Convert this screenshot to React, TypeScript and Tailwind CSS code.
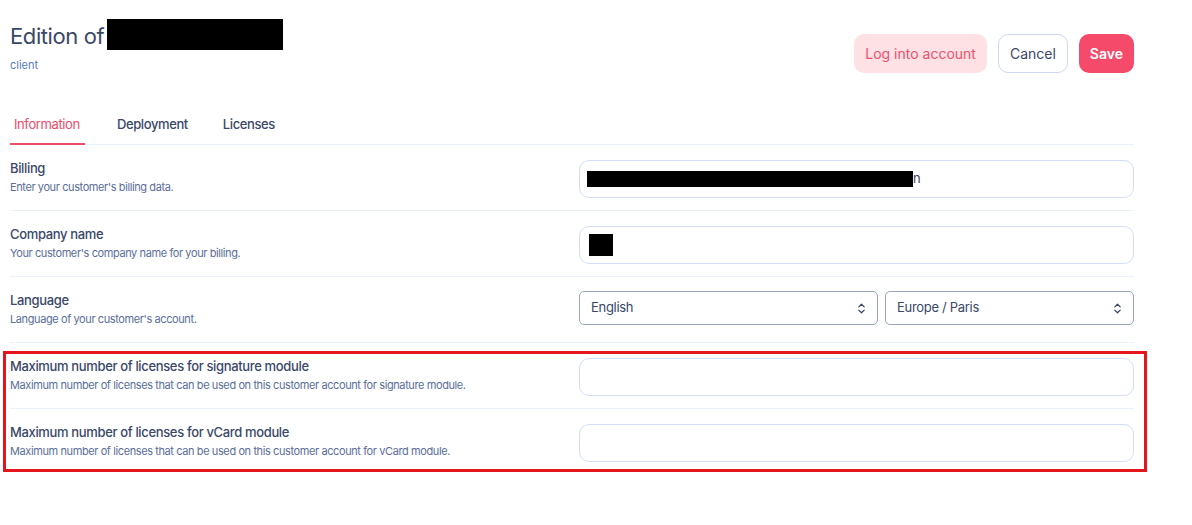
import { ChevronsUpDown } from "lucide-react";

const font = { fontFamily: "Inter, 'Noto Sans', sans-serif" };

function Row({ title, desc, children, last }: { title: string; desc: string; children: React.ReactNode; last?: boolean }) {
  return (
    <div className={"flex h-[66px] items-start pt-[15px] " + (last ? "" : "border-b border-[#eaf1fc]")}>
      <div className="w-[569px] shrink-0">
        <div className="text-[13px] font-medium leading-[16px] tracking-[-0.35px] text-[#3a4768]">{title}</div>
        <div className="mt-[4px] text-[11px] leading-[14px] tracking-[-0.4px] text-[#5b6e99]">{desc}</div>
      </div>
      <div className="flex flex-1 gap-[7px]">{children}</div>
    </div>
  );
}

function TextInput({ children }: { children?: React.ReactNode }) {
  return (
    <div className="flex h-[38px] flex-1 items-center rounded-[10px] border border-[#d2def6] bg-white px-[7px]">
      {children}
    </div>
  );
}

function Select({ value, className }: { value: string; className: string }) {
  return (
    <div className={"-mt-[1px] flex h-[34px] items-center justify-between rounded-[5px] border border-[#9aa6c2] bg-white pl-[11px] pr-[9px] " + className}>
      <span className="text-[13px] tracking-[-0.3px] text-[#3a4768]">{value}</span>
      <ChevronsUpDown size={13} strokeWidth={2.4} className="text-[#3a4768]" />
    </div>
  );
}

export default function App() {
  return (
    <div className="min-h-screen bg-white" style={font}>
      <div className="w-[1134px] pl-[10px] pt-[19px]">
        <div className="flex items-start justify-between">
          <div>
            <div className="flex items-start">
              <h1 className="pt-[1px] text-[22px] leading-[32px] tracking-[-0.4px] text-[#3a4768]">Edition of</h1>
              <div className="ml-[3px] h-[31px] w-[176px] bg-black" />
            </div>
            <div className="mt-[5px] text-[11px] text-[#5b7bc0]">client</div>
          </div>
          <div className="mt-[15px] flex gap-[11px]">
            <button className="h-[39px] rounded-[10px] bg-[#fde1e5] px-[11px] text-[14px] text-[#f0506e]">Log into account</button>
            <button className="h-[39px] rounded-[10px] border border-[#cdd9f3] bg-white px-[11px] text-[14px] text-[#3a4768]">Cancel</button>
            <button className="h-[39px] rounded-[10px] bg-[#f64a6b] px-[11px] text-[14px] font-semibold text-white">Save</button>
          </div>
        </div>

        <div className="mt-[41px] flex border-b border-[#eaf1fc] text-[13px] font-medium tracking-[-0.4px]">
          <div className="-mb-[1px] w-[75px] border-b-2 border-[#f04a6a] pb-[9px] pl-[4px] font-normal text-[#f04a6a]">Information</div>
          <div className="ml-[32px] pb-[9px] text-[#3a4768]">Deployment</div>
          <div className="ml-[35px] pb-[9px] text-[#3a4768]">Licenses</div>
        </div>

        <Row title="Billing" desc="Enter your customer's billing data.">
          <TextInput>
            <div className="h-[16px] w-[326px] bg-black" />
            <span className="text-[13px] text-[#3a4768]">n</span>
          </TextInput>
        </Row>
        <Row title="Company name" desc="Your customer's company name for your billing.">
          <TextInput>
            <div className="ml-[2px] h-[22px] w-[24px] bg-black" />
          </TextInput>
        </Row>
        <Row title="Language" desc="Language of your customer's account.">
          <Select value="English" className="w-[299px] shrink-0" />
          <Select value="Europe / Paris" className="flex-1" />
        </Row>

        <div className="relative">
          <div className="pointer-events-none absolute -left-[7px] -right-[13px] top-[8px] bottom-[3px] border-[3px] border-[#e4151b]" />
          <Row title="Maximum number of licenses for signature module" desc="Maximum number of licenses that can be used on this customer account for signature module.">
            <TextInput />
          </Row>
          <Row last title="Maximum number of licenses for vCard module" desc="Maximum number of licenses that can be used on this customer account for vCard module.">
            <TextInput />
          </Row>
        </div>
      </div>
    </div>
  );
}
